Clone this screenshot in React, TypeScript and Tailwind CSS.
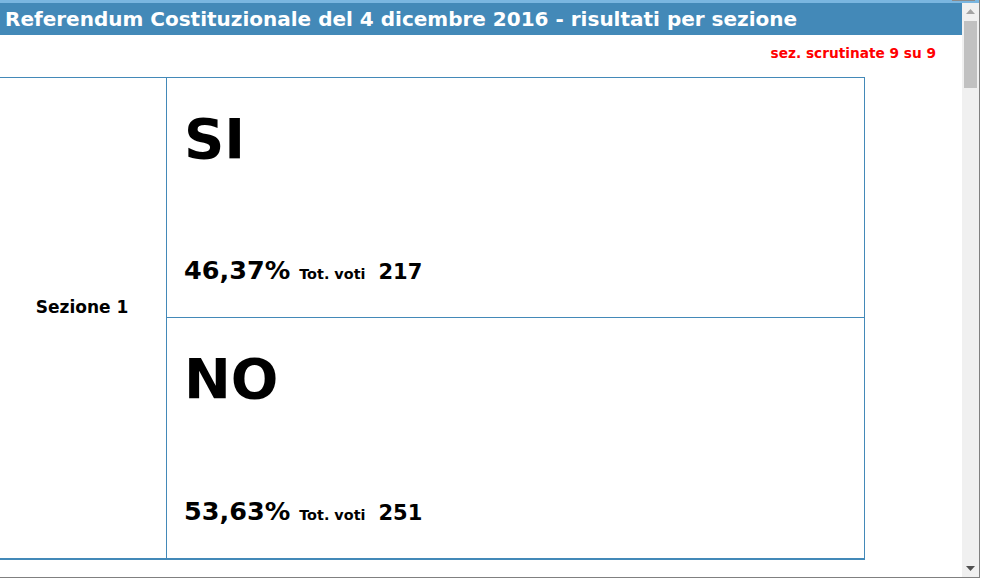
import React from "react";

const font = { fontFamily: '"DejaVu Sans", Verdana, sans-serif' };

function ResultCell({ label, pct, votes, last }: { label: string; pct: string; votes: string; last?: boolean }) {
  return (
    <div
      className={`flex h-[240px] flex-col justify-between pl-[17px] pt-[33px] pb-[34px] ${
        last ? "" : "border-b border-[#4389b8]"
      }`}
    >
      <div className="text-[56px] font-bold leading-none text-black">{label}</div>
      <div className="flex items-baseline leading-none text-black">
        <span className="text-[25.5px] font-bold">{pct}</span>
        <span className="ml-[9px] text-[14.4px] font-bold">Tot. voti</span>
        <span className="ml-[13px] text-[21px] font-bold">{votes}</span>
      </div>
    </div>
  );
}

function Scrollbar() {
  return (
    <div className="flex w-[17px] flex-col bg-[#f0f0f0]">
      <div className="flex h-[17px] items-center justify-center">
        <svg width="9" height="5" viewBox="0 0 9 5">
          <path d="M4.5 0 L9 5 L0 5 Z" fill="#a3a3a3" />
        </svg>
      </div>
      <div className="mx-[2px] mt-[1px] h-[67px] bg-[#c1c1c1]" />
      <div className="flex-1" />
      <div className="flex h-[17px] items-center justify-center">
        <svg width="9" height="5" viewBox="0 0 9 5">
          <path d="M0 0 L9 0 L4.5 5 Z" fill="#505050" />
        </svg>
      </div>
    </div>
  );
}

export default function App() {
  return (
    <div className="h-[584px] w-[987px] overflow-hidden bg-white" style={font}>
      <div className="relative flex h-[578px] w-[980px] flex-col border-r border-b border-[#808080]">
        <div className="h-[3px] bg-[#7ab6e0]" />
        <div className="absolute right-[4px] top-0 h-[1px] w-[23px] bg-[#8a8a8a]" />
        <div className="flex flex-1 overflow-hidden">
          <div className="flex-1 overflow-hidden">
            <div className="flex h-[32px] items-center bg-[#4389b8] pl-[5px] text-[20px] font-bold text-white">
              Referendum Costituzionale del 4 dicembre 2016 - risultati per sezione
            </div>
            <div className="flex h-[42px] items-center justify-end pr-[26px] pb-[6px] text-[13.7px] font-bold text-[#ff0000]">
              sez. scrutinate 9 su 9
            </div>
            <div className="flex w-[865px] border-t border-r border-b-2 border-[#4389b8]">
              <div className="flex w-[167px] items-center justify-center border-r border-[#4389b8] pb-[20px] pr-[2px] text-[17px] font-bold text-black">
                Sezione 1
              </div>
              <div className="flex flex-1 flex-col">
                <ResultCell label="SI" pct="46,37%" votes="217" />
                <ResultCell label="NO" pct="53,63%" votes="251" last />
              </div>
            </div>
          </div>
          <Scrollbar />
        </div>
      </div>
    </div>
  );
}
